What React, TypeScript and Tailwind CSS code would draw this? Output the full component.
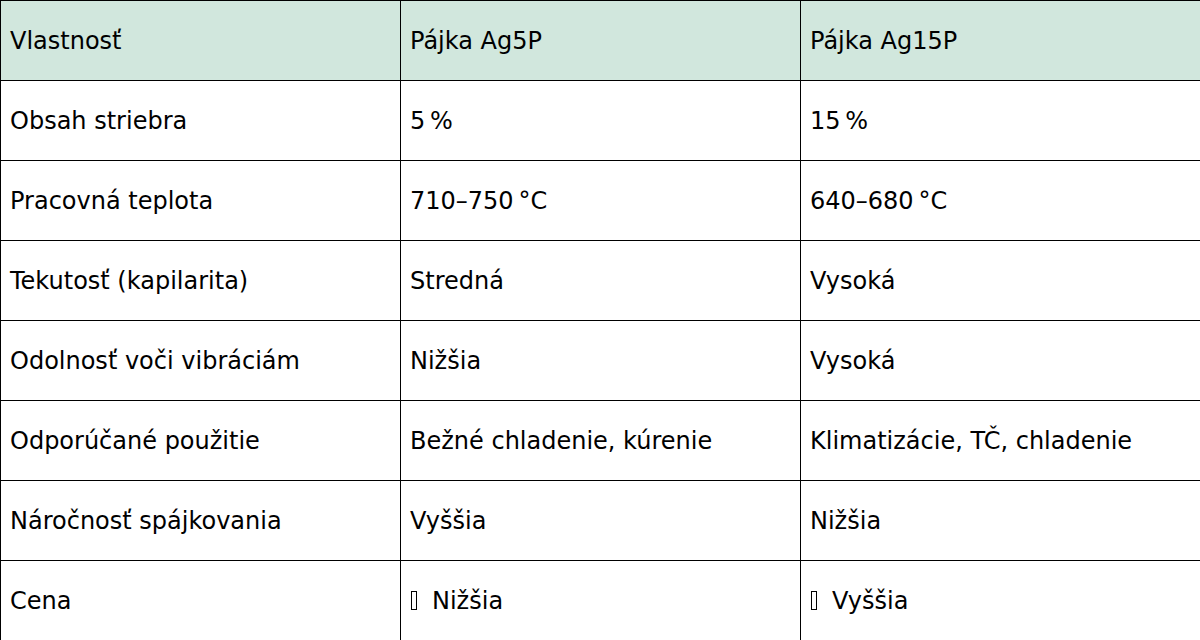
const rows: [string, string, string][] = [
  ['Obsah striebra', '5\u202F%', '15\u202F%'],
  ['Pracovná teplota', '710–750\u202F°C', '640–680\u202F°C'],
  ['Tekutosť (kapilarita)', 'Stredná', 'Vysoká'],
  ['Odolnosť voči vibráciám', 'Nižšia', 'Vysoká'],
  ['Odporúčané použitie', 'Bežné chladenie, kúrenie', 'Klimatizácie, TČ, chladenie'],
  ['Náročnosť spájkovania', 'Vyššia', 'Nižšia'],
];

function Tofu() {
  return <span className="inline-block w-[6px] h-[19px] border border-black align-[-3px] ml-[1px]" />;
}

function Cell({ children, head = false }: { children: React.ReactNode; head?: boolean }) {
  return (
    <div className={`h-[80px] flex items-center pl-[9px] border-l border-t border-black ${head ? 'bg-[#d1e7dd]' : 'bg-white'}`}>
      {children}
    </div>
  );
}

export default function App() {
  return (
    <div className="w-[1200px] h-[640px] overflow-hidden bg-white text-black text-[24px]" style={{ fontFamily: '"DejaVu Sans", sans-serif' }}>
      <div className="grid grid-cols-[400px_400px_401px]">
        <Cell head>Vlastnosť</Cell>
        <Cell head>Pájka Ag5P</Cell>
        <Cell head>Pájka Ag15P</Cell>
        {rows.map((r) => (
          <>
            <Cell key={r[0] + 'a'}>{r[0]}</Cell>
            <Cell key={r[0] + 'b'}>{r[1]}</Cell>
            <Cell key={r[0] + 'c'}>{r[2]}</Cell>
          </>
        ))}
        <Cell>Cena</Cell>
        <Cell><Tofu /><span className="ml-[15px]">Nižšia</span></Cell>
        <Cell><Tofu /><span className="ml-[15px]">Vyššia</span></Cell>
      </div>
    </div>
  );
}
